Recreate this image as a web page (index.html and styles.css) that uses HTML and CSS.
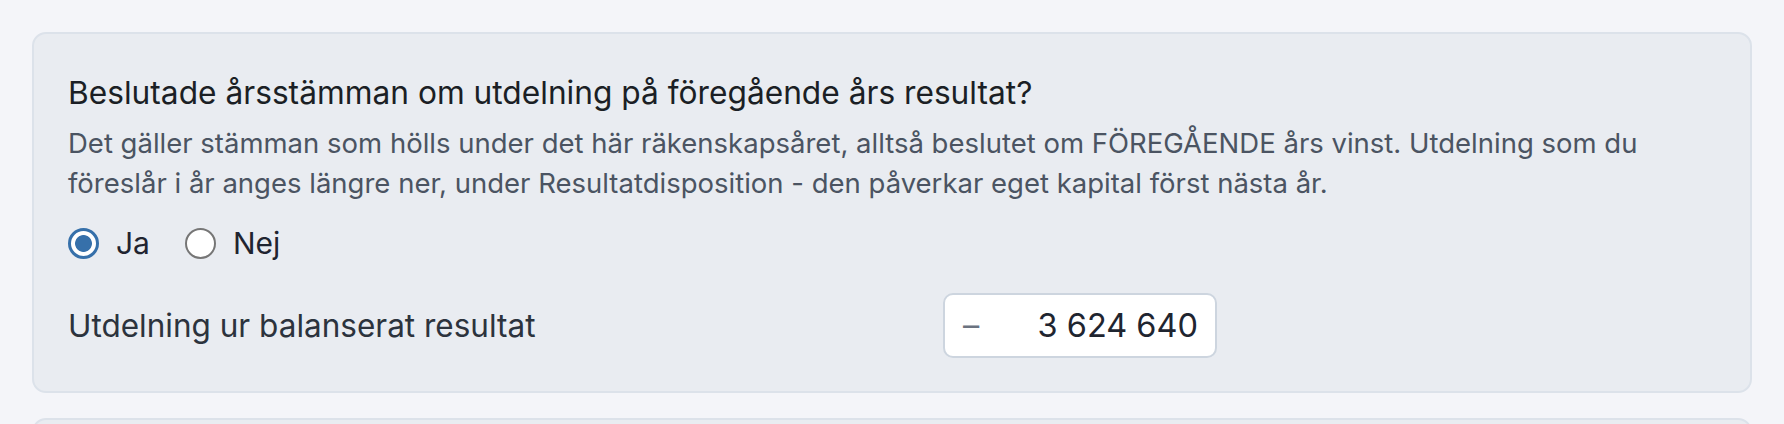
FILE: index.html
```html
<!DOCTYPE html>
<html lang="sv">
<head>
<meta charset="utf-8">
<title>Utdelning</title>
<link rel="stylesheet" href="styles.css">
</head>
<body>
<main class="page">
  <section class="card">
    <h2 class="card-title">Beslutade årsstämman om utdelning på föregående års resultat?</h2>
    <p class="card-desc">Det gäller stämman som hölls under det här räkenskapsåret, alltså beslutet om FÖREGÅENDE års vinst. Utdelning som du föreslår i år anges längre ner, under Resultatdisposition - den påverkar eget kapital först nästa år.</p>
    <div class="radio-group">
      <label class="radio-option"><input type="radio" name="beslut" class="radio" checked><span>Ja</span></label>
      <label class="radio-option"><input type="radio" name="beslut" class="radio"><span>Nej</span></label>
    </div>
    <div class="field-row">
      <span class="field-label">Utdelning ur balanserat resultat</span>
      <div class="amount-input">
        <span class="amount-sign">–</span>
        <span class="amount-value">3 624 640</span>
      </div>
    </div>
  </section>
  <section class="card card-next"></section>
</main>
</body>
</html>
```

FILE: styles.css
```css
* { box-sizing: border-box; }

html, body {
  margin: 0;
  padding: 0;
  background: #f4f5f9;
  font-family: Inter, "Noto Sans", "Liberation Sans", sans-serif;
  color: #1f2329;
}

.page {
  padding: 32px 32px 0 32px;
  display: flex;
  flex-direction: column;
  gap: 25px;
}

.card {
  background: #e9ecf1;
  border: 2px solid #dce2ea;
  border-radius: 14px;
  padding: 39px 34px 33px 34px;
}

.card-next {
  min-height: 120px;
}

.card-title {
  margin: 0;
  font-size: 31.7px;
  line-height: 40px;
  font-weight: 400;
  color: #1b1f25;
}

.card-desc {
  margin: 11px 0 0 0;
  font-size: 27.5px;
  line-height: 39.5px;
  color: #4b5462;
}

.radio-group {
  margin-top: 25px;
  display: flex;
  align-items: center;
  gap: 35px;
}

.radio-option {
  display: flex;
  align-items: center;
  gap: 17px;
  font-size: 30px;
  line-height: 31px;
  color: #1f2430;
}

.radio {
  appearance: none;
  -webkit-appearance: none;
  margin: 0;
  width: 31px;
  height: 31px;
  border-radius: 50%;
  border: 2px solid #767676;
  background: #ffffff;
}

.radio:checked {
  border: 3px solid #3670aa;
  background: radial-gradient(circle, #3670aa 0 8px, #ffffff 8.8px);
}

.field-row {
  margin-top: 34px;
  display: grid;
  grid-template-columns: 875px 274px;
  align-items: center;
}

.field-label {
  font-size: 31.5px;
  color: #2c333d;
}

.amount-input {
  height: 65px;
  background: #ffffff;
  border: 2px solid #cdd5df;
  border-radius: 10px;
  padding: 0 17px 0 18px;
  display: flex;
  align-items: center;
  justify-content: space-between;
  font-size: 32.5px;
}

.amount-sign {
  color: #6b7380;
}

.amount-value {
  color: #1f2530;
}
```
